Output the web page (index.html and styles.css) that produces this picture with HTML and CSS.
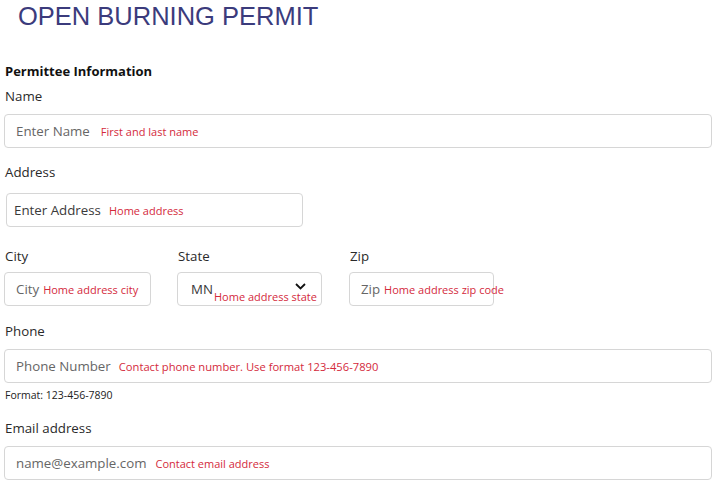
FILE: index.html
```html
<!DOCTYPE html>
<html lang="en">
<head>
<meta charset="utf-8">
<title>Open Burning Permit</title>
<link rel="stylesheet" href="styles.css">
</head>
<body>
<div class="page">
  <h1 class="title">OPEN BURNING PERMIT</h1>
  <form class="form">
    <h2 class="section">Permittee Information</h2>

    <div class="group g-name">
      <label class="label">Name</label>
      <div class="control full">
        <span class="ph">Enter Name</span><span class="hint gap-l">First and last name</span>
      </div>
    </div>

    <div class="group g-address">
      <label class="label">Address</label>
      <div class="control address">
        <span class="ph dark">Enter Address</span><span class="hint gap-m">Home address</span>
      </div>
    </div>

    <div class="row">
      <div class="col">
        <label class="label">City</label>
        <div class="control">
          <span class="ph">City</span><span class="hint gap-s">Home address city</span>
        </div>
      </div>
      <div class="col">
        <label class="label">State</label>
        <div class="control select">
          <span class="ph dark">MN</span><span class="hint low">Home address state</span>
          <svg class="chev" width="11" height="7" viewBox="0 0 11 7"><path d="M1 1l4.5 4.5L10 1" fill="none" stroke="#111" stroke-width="1.8"/></svg>
        </div>
      </div>
      <div class="col zip">
        <label class="label">Zip</label>
        <div class="control">
          <span class="ph">Zip</span><span class="hint gap-s">Home address zip code</span>
        </div>
      </div>
    </div>

    <div class="group g-phone">
      <label class="label">Phone</label>
      <div class="control full">
        <span class="ph">Phone Number</span><span class="hint gap-m">Contact phone number. Use format 123-456-7890</span>
      </div>
      <div class="help">Format: 123-456-7890</div>
    </div>

    <div class="group g-email">
      <label class="label">Email address</label>
      <div class="control full">
        <span class="ph">name@example.com</span><span class="hint gap-n">Contact email address</span>
      </div>
    </div>
  </form>
</div>
</body>
</html>
```
FILE: styles.css
```css
html, body {
  margin: 0;
  padding: 0;
  background: #ffffff;
}

body {
  font-family: "Open Sans", "Noto Sans", sans-serif;
  color: #222;
}

.page {
  padding: 0 2px 0 4px;
}

.title {
  margin: 0;
  padding: 1px 0 0 14px;
  font-family: "Liberation Sans", Arial, sans-serif;
  font-weight: normal;
  font-size: 25.5px;
  line-height: 30px;
  color: #3b3b7c;
}

.form {
  margin-top: 31px;
}

.section {
  margin: 0 0 7px 1px;
  font-size: 13px;
  font-weight: bold;
  line-height: 18px;
  color: #111;
}

.label {
  display: block;
  margin: 0 0 9px 1px;
  font-size: 13.3px;
  line-height: 18px;
  color: #2a2a2a;
}

.g-name { margin-bottom: 15px; }
.g-address { margin-bottom: 20px; }
.g-address .label { margin-bottom: 12px; }
.g-phone { margin-bottom: 17px; }

.control {
  box-sizing: border-box;
  height: 34px;
  display: flex;
  align-items: center;
  padding: 0 11px;
  border: 1px solid #d6d6d6;
  border-radius: 4px;
  background: #fff;
  white-space: nowrap;
}

.full {
  width: 100%;
}

.address {
  width: 297px;
  margin-left: 2px;
  padding-left: 7px;
}

.ph {
  font-size: 13.3px;
  color: #666666;
}

.ph.dark {
  color: #3a3a3a;
}

.hint {
  font-size: 11px;
  color: #d42a3c;
}

.g-phone .hint { font-size: 11.2px; }

.gap-l { margin-left: 11px; }
.gap-m { margin-left: 8px; }
.gap-n { margin-left: 9px; }
.gap-s { margin-left: 4px; }

.row {
  display: grid;
  grid-template-columns: 147px 145px 146px;
  column-gap: 26px;
  margin-bottom: 16px;
}

.row .label {
  margin-bottom: 7px;
}

.zip {
  margin-left: 1px;
}

.select {
  position: relative;
  padding-left: 13px;
}

.select .hint {
  align-self: flex-end;
  margin-bottom: 1px;
  margin-left: 1px;
}

.chev {
  position: absolute;
  right: 15px;
  top: 10px;
}

.help {
  margin: 5px 0 0 1px;
  font-size: 10.5px;
  line-height: 14px;
  color: #222;
}
```
